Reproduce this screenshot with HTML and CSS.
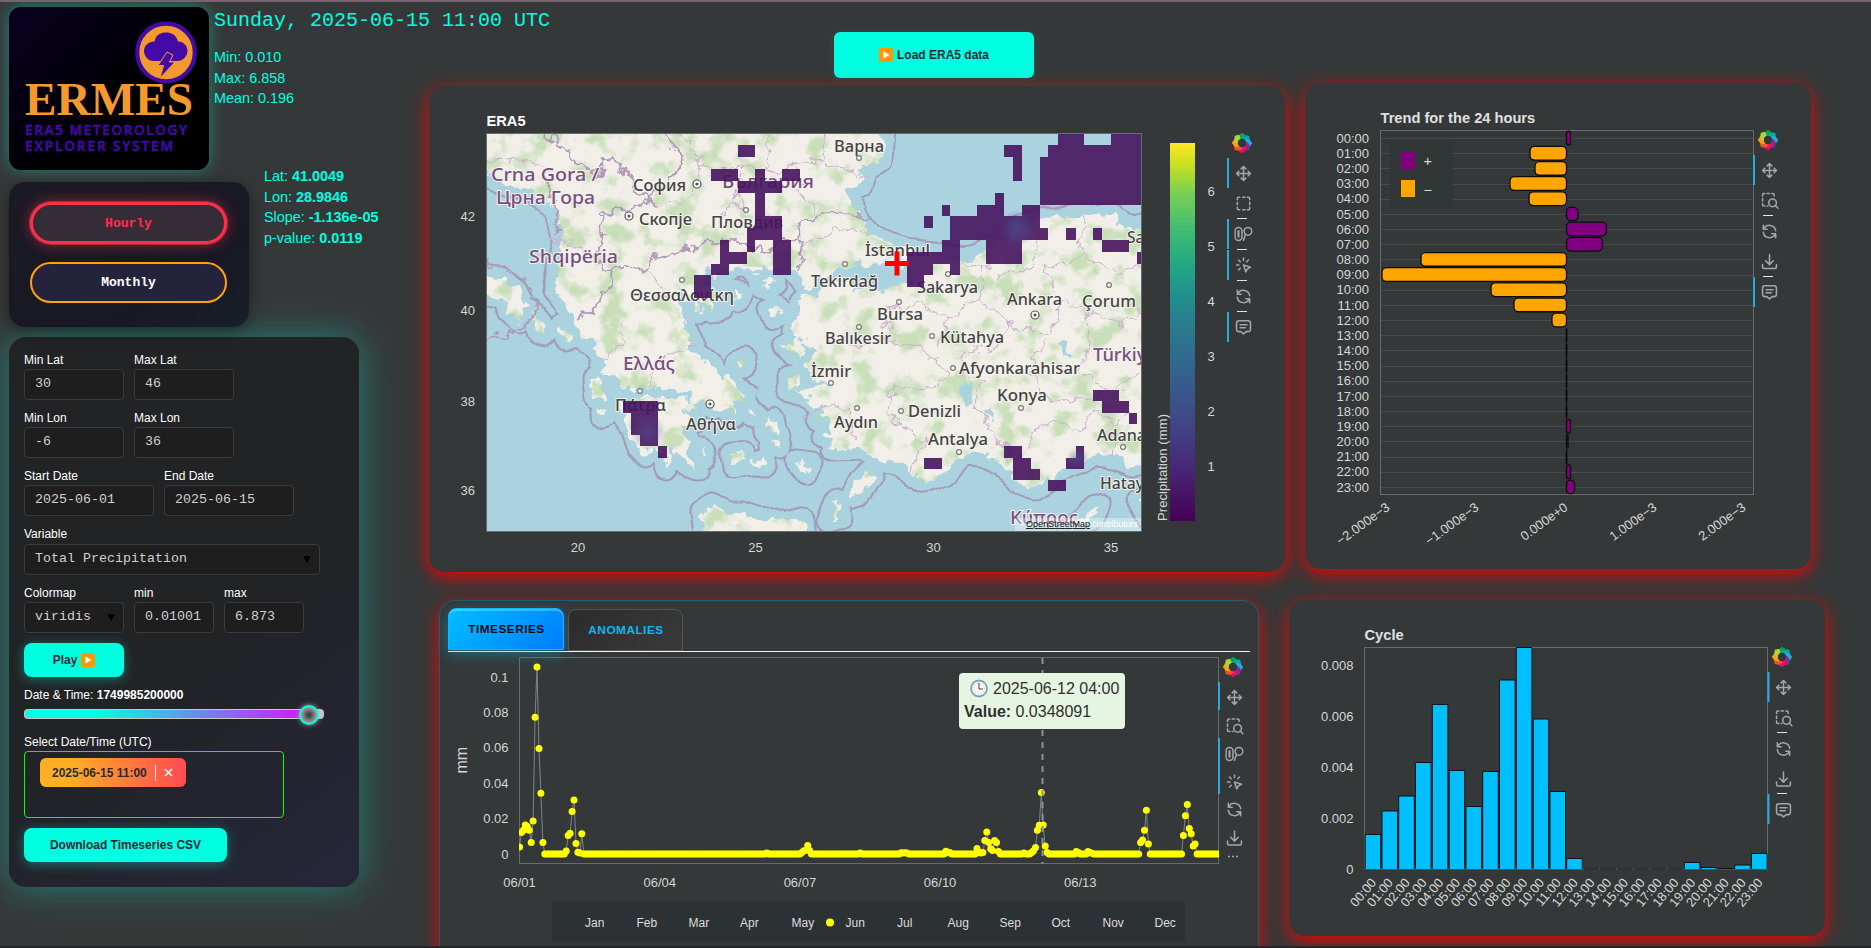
FILE: index.html
```
<!DOCTYPE html>
<html lang="en">
<head>
<meta charset="utf-8">
<title>ERMES</title>
<link rel="stylesheet" href="styles.css">
</head>
<body>
<svg class="defs" width="0" height="0" aria-hidden="true">
  <defs>
    <symbol id="i-pan" viewBox="0 0 24 24"><path d="M18 9l3 3l-3 3M6 9l-3 3l3 3M3 12h18M9 18l3 3l3-3M15 6l-3-3l-3 3M12 3v18"/></symbol>
    <symbol id="i-select" viewBox="0 0 24 24"><path d="M4 7V5.500Q4 4 5.500 4H7M11 4h3M17 4h1.500Q20 4 20 5.500V7M20 10.500v3M20 17v1.500Q20 20 18.500 20H17M14 20h-3M7 20H5.500Q4 20 4 18.500V17M4 13.500v-3"/></symbol>
    <symbol id="i-zoombox" viewBox="0 0 24 24"><path d="M3 6V4.500Q3 3 4.500 3H6M9 3h3M15 3h1.500Q18 3 18 4.500V6M3 9.500v3M3 16v1.500Q3 19 4.500 19H6M9 19h1"/><circle cx="16" cy="15" r="5"/><path d="M19.500 18.500l3.500 3.500"/></symbol>
    <symbol id="i-wheel" viewBox="0 0 24 24"><rect x="1" y="3.500" width="9" height="17" rx="4.500"/><path d="M5.500 8.500v7" stroke-width="2.800"/><circle cx="17.800" cy="8.500" r="5"/><path d="M14.500 12.500l-2.500 7.500"/></symbol>
    <symbol id="i-tap" viewBox="0 0 24 24"><path d="M3 12h3M12 3v3M7.800 7.800l-2.200-2.200M16.200 7.800l2.200-2.200M7.800 16.200l-2.200 2.200M12 12l9 3l-4 2l-2 4z"/></symbol>
    <symbol id="i-reset" viewBox="0 0 24 24"><path d="M20 11a8.100 8.100 0 0 0-15.500-2M4 4v5h5M4 13a8.100 8.100 0 0 0 15.500 2M20 20v-5h-5"/></symbol>
    <symbol id="i-save" viewBox="0 0 24 24"><path d="M3 16v3a2 2 0 0 0 2 2h14a2 2 0 0 0 2-2v-3M7 11l5 5l5-5M12 3v13"/></symbol>
    <symbol id="i-hover" viewBox="0 0 24 24"><path d="M7.500 9h9M7.500 13h7M8.500 18H6a3 3 0 0 1-3-3V7a3 3 0 0 1 3-3h12a3 3 0 0 1 3 3v8a3 3 0 0 1-3 3h-2.500L12 21z"/></symbol>
    <symbol id="i-play" viewBox="0 0 14 14"><rect width="14" height="14" rx="1.500" fill="#ff9800"/><path d="M4.500 3.500L10.500 7L4.500 10.500z" fill="#fff"/></symbol>
  </defs>
</svg>

<div class="page">
  <aside class="sidebar">
    <div class="brand">
      <div class="logo">
        <svg viewBox="0 0 200 163" width="200" height="163">
          <text class="logo-name" x="16" y="108" textLength="168" lengthAdjust="spacingAndGlyphs">ERMES</text>
          <text class="logo-sub" x="16" y="128" textLength="162">ERA5 METEOROLOGY</text>
          <text class="logo-sub" x="16" y="144" textLength="148">EXPLORER SYSTEM</text>
          <circle cx="157" cy="45.500" r="28.800" fill="#f39a2e" stroke="#430aa6" stroke-width="4.200"/>
          <path fill="#430aa6" d="M145 54C139 54 135 49 135 44S139 34.500 145.500 34.500C147 28 151 25.500 157 25.500S167 28 169 34.500C175 34.500 178.500 39 178.500 44S174 54 168 54z"/>
          <path fill="#430aa6" stroke="#f39a2e" d="M158 45L149 58.500H154.500L151 71L166 55H160.500L164 48z"/>
        </svg>
      </div>
      <div class="headline">
        <h1>Sunday, 2025-06-15 11:00 UTC</h1>
        <p>Min: 0.010</p><p>Max: 6.858</p><p>Mean: 0.196</p>
      </div>
    </div>
    <div class="mode">
      <div class="mode-panel">
        <button class="pill active">Hourly</button>
        <button class="pill">Monthly</button>
      </div>
      <div class="point">
        <p>Lat: <b>41.0049</b></p><p>Lon: <b>28.9846</b></p><p>Slope: <b>-1.136e-05</b></p><p>p-value: <b>0.0119</b></p>
      </div>
    </div>
    <div class="controls">
      <div class="row">
        <div class="field w100"><span>Min Lat</span><div class="box">30</div></div>
        <div class="field w100"><span>Max Lat</span><div class="box">46</div></div>
      </div>
      <div class="row">
        <div class="field w100"><span>Min Lon</span><div class="box">-6</div></div>
        <div class="field w100"><span>Max Lon</span><div class="box">36</div></div>
      </div>
      <div class="row">
        <div class="field w130"><span>Start Date</span><div class="box">2025-06-01</div></div>
        <div class="field w130"><span>End Date</span><div class="box">2025-06-15</div></div>
      </div>
      <div class="row">
        <div class="field variable"><span>Variable</span><div class="box select">Total Precipitation<i></i></div></div>
      </div>
      <div class="row">
        <div class="field w100"><span>Colormap</span><div class="box select">viridis<i></i></div></div>
        <div class="field w80"><span>min</span><div class="box">0.01001</div></div>
        <div class="field w80"><span>max</span><div class="box">6.873</div></div>
      </div>
      <button class="cyan play">Play <svg width="14" height="14"><use href="#i-play"/></svg></button>
      <div class="label">Date &amp; Time: <b>1749985200000</b></div>
      <div class="slider"><div class="fill"></div><div class="knob"></div></div>
      <div class="label">Select Date/Time (UTC)</div>
      <div class="choices"><div class="chip">2025-06-15 11:00<span class="sep"></span><svg width="9" height="9" viewBox="0 0 9 9"><path d="M1 1l7 7M8 1l-7 7"/></svg></div></div>
      <button class="cyan download">Download Timeseries CSV</button>
    </div>
  </aside>

  <main class="main">
    <button class="cyan load"><svg width="14" height="14"><use href="#i-play"/></svg> Load ERA5 data</button>
    <div class="cards top">
      <section class="card map-card"><svg id="map" viewBox="429 86 856 486" width="856" height="486">
        <defs>
          <clipPath id="frame"><rect x="486.500" y="133.500" width="655" height="398"/></clipPath>
          <filter id="rough" x="470" y="120" width="690" height="430" filterUnits="userSpaceOnUse" color-interpolation-filters="sRGB">
            <feTurbulence type="fractalNoise" baseFrequency="0.080" numOctaves="3" seed="4" result="n"/>
            <feDisplacementMap in="SourceGraphic" in2="n" scale="18" xChannelSelector="R" yChannelSelector="G"/>
          </filter>
          <filter id="wavy" x="470" y="120" width="690" height="430" filterUnits="userSpaceOnUse" color-interpolation-filters="sRGB">
            <feTurbulence type="fractalNoise" baseFrequency="0.035" numOctaves="1" seed="4" result="n"/>
            <feDisplacementMap in="SourceGraphic" in2="n" scale="14" xChannelSelector="R" yChannelSelector="G"/>
          </filter>
          <filter id="woods" x="486" y="133" width="656" height="398" filterUnits="userSpaceOnUse" color-interpolation-filters="sRGB">
            <feTurbulence type="fractalNoise" baseFrequency="0.040" numOctaves="5" seed="11"/>
            <feColorMatrix values="0 0 0 0 0.720  0 0 0 0 0.850  0 0 0 0 0.650  5 0 0 0 -2.450" result="g"/>
            <feComposite in="g" in2="SourceGraphic" operator="in"/>
          </filter>
          <linearGradient id="viridis" x1="0" y1="1" x2="0" y2="0">
            <stop offset="0" stop-color="#440154"/><stop offset=".13" stop-color="#482475"/><stop offset=".25" stop-color="#414487"/><stop offset=".38" stop-color="#355f8d"/><stop offset=".5" stop-color="#2a788e"/><stop offset=".6" stop-color="#21918c"/><stop offset=".68" stop-color="#22a884"/><stop offset=".78" stop-color="#44bf70"/><stop offset=".87" stop-color="#7ad151"/><stop offset=".95" stop-color="#d0e11c"/><stop offset="1" stop-color="#fde725"/>
          </linearGradient>
          <radialGradient id="spot"><stop offset="0" stop-color="#46518f" stop-opacity=".9"/><stop offset="1" stop-color="#46518f" stop-opacity="0"/></radialGradient>
          <g id="land">
            <path d="M460 110H885L882 160L864 168L859 184L846 192L855 206L862 220L870 232L882 241L897 247L915 251L935 253L950 259L965 261L978 258L987 250L1003 240L1022 226L1045 219L1068 216L1092 216L1110 213L1121 226L1131 230L1170 222V459L1130 465L1122 461L1108 456L1096 455L1085 461L1070 467L1055 473L1045 481L1032 488L1020 485L1011 474L1000 463L985 455L970 453L960 455L952 466L945 475L925 483L911 475L898 463L872 457L862 449L832 450L836 440L822 436L832 425L816 418L828 408L812 402L800 392L815 388L830 384L812 376L805 362L815 352L812 342L800 338L792 330L800 312L800 300L812 290L804 284L798 275L785 266L760 267L738 266L722 274L708 273L702 282L716 290L720 305L706 292L712 312L698 298L700 314L688 302L678 290L676 300L684 322L694 345L686 350L703 363L716 370L726 380L734 400L735 417L728 406L714 408L704 402L692 402L698 414L684 410L694 424L684 428L686 442L695 470L681 458L674 450L669 452L667 470L662 452L652 447L645 458L638 448L632 432L624 420L622 406L634 400L652 396L668 398L690 400L686 394L665 389L640 388L620 388L614 378L600 370L605 362L595 348L575 330L574 315L566 305L556 292L555 280L558 262L563 240L560 222L556 208L542 200L520 188L500 180L460 164z"/>
            <path d="M470 272L505 280L518 290L524 305L519 322L508 312L505 300L490 296L470 298z"/>
            <path d="M532 312L540 322L546 334L538 332zM560 324L572 336L566 340zM592 382L598 378L606 396L594 398zM600 408L608 412L604 418L598 414zM694 356L712 364L726 378L740 392L746 402L736 400L722 386L706 376z"/>
            <path d="M702 512L712 506L728 514L745 514L762 520L780 518L804 520L806 540H706z"/>
            <path d="M783 346L800 338L808 348L800 356L790 352zM788 376L798 374L796 392L788 390zM737 360L746 358L744 368zM822 420l10-4l-2 8zM748 406l10 8l-8 0zM764 430l10-12l2 14zM730 454l14-2l-2 10l-10 2zM750 462l14-4l2 10zM770 444l10-6l2 10zM798 462l14 2l-6 8zM744 395l8 4M700 450l4 2l-2 4zM760 285l8-8l6 6l-6 6zM770 310l6-4l8 6l-10 4zM734 290l8 4l-2 6l-6-2zM852 498L856 484L871 469L872 476L860 496zM829 522l8-22l2 18zM1078 522L1098 504L1090 522L1070 534zM1138 500h10v14zM754 272l4-2l2 4z"/>
          </g>
        </defs>
        <g clip-path="url(#frame)">
          <rect x="486" y="133" width="656" height="399" fill="#aad3df"/>
          <g filter="url(#wavy)">
            <use href="#land" fill="#a39bb8" stroke="#a39bb8" stroke-width="25" stroke-linejoin="round"/>
            <use href="#land" fill="#aad3df" stroke="#aad3df" stroke-width="21" stroke-linejoin="round"/>
          </g>
          <g filter="url(#rough)"><use href="#land" fill="#f2efe9"/></g>
          <g filter="url(#woods)" opacity=".7"><use href="#land"/></g>
          <g filter="url(#rough)" fill="none">
            <path fill="#aad3df" d="M842 268L868 262L893 264L910 270L916 284L895 282L882 294L858 288L838 280L812 296L808 292zM960 386l8-5l3 22l-5 5zM984 406l8 4l2 10l-8-3zM1060 345l8-5l5 15l-6 2zM905 415l9-1l-2 4z"/>
            <g stroke="#b09ab8" stroke-width="2.200">
              <path d="M542 110V130L545 141L556 138L575 162L598 175L606 157L618 162L632 186M665 110V130L683 162L670 180L640 208L622 210L600 215L602 240L597 256L602 270L645 268L655 258L680 252L705 244L735 240L755 250L775 248L798 238L800 222L818 213L870 217M798 238L804 258L797 272M632 186L660 206M610 270L613 285L600 300L580 322M556 208L556 232M545 175L556 208M470 258L500 266L524 280L538 300L534 320L510 334L470 350"/>
            </g>
            <g stroke="#cbb3cb" stroke-width="1.300">
              <path d="M470 158L520 160L545 168M680 133L700 165L720 172L745 168L770 172L795 165L820 160L870 180M700 165L695 195L668 206M745 168L738 205L716 218M795 165L800 195L820 213M770 113L768 172M830 113L820 160M545 240L570 238L590 268M650 268L668 300M620 322L622 345L600 358M650 388L655 360L700 345M800 420L830 405L850 408L855 440M850 345L890 340L925 352L950 375L930 390L895 388L885 415L925 440L910 472M890 340L885 310L920 305L945 318L980 300L985 270L960 262M945 318L940 350M980 300L1010 325L1000 345L965 352L960 375L985 385L975 400L995 440L1025 470M1010 325L1050 335L1060 300L1045 270L1080 255L1085 215M1060 300L1085 310L1120 325L1162 300M1085 310L1090 345L1080 370L1110 392L1085 400L1050 400L1030 370L1045 340M1110 392L1130 380L1162 355M1080 255L1120 270L1162 262M1033 450L1032 428L1055 420L1080 430L1095 410L1110 425L1130 410M1040 240L1030 265L1000 275M870 233L845 225L820 240L800 250M1112 460L1118 430"/>
            </g>
          </g>
          <g id="places"></g>
          <g id="cells" fill="#471560" opacity=".9"></g>
          <circle cx="648" cy="432" r="18" fill="url(#spot)" opacity=".55"/><circle cx="1017" cy="228" r="18" fill="url(#spot)" opacity=".8"/><circle cx="1077" cy="459" r="11" fill="url(#spot)" opacity=".6"/>
          <path d="M885 263.500h24M897 251.500v24" stroke="#f00" stroke-width="5"/>
          <rect x="1015" y="518" width="127" height="14" fill="#fff" opacity=".35"/>
          <text class="osm" x="1026" y="527" textLength="64">OpenStreetMap</text>
          <text class="osm2" x="1092" y="527" textLength="46">contributors</text>
        </g>
        <rect class="outline" x="486.500" y="133.500" width="655" height="398"/>
        <rect x="1170" y="143" width="25" height="378" fill="url(#viridis)"/>
        <text class="title light" x="486.500" y="126">ERA5</text>
      </svg></section>
      <section class="card trend-card"><svg id="trend" viewBox="1305 83 506 486" width="506" height="486"></svg></section>
    </div>
    <div class="cards bottom">
      <section class="card series-card">
        <nav class="tabs"><div class="tab on">TIMESERIES</div><div class="tab">ANOMALIES</div></nav>
        <svg id="series" viewBox="440 652 818 296" width="818" height="296"></svg>
      </section>
      <section class="card cycle-card"><svg id="cycle" viewBox="1289 600 536 336" width="536" height="336"></svg></section>
    </div>
  </main>
</div>
<script src="charts.js"></script>
</body>
</html>
```
FILE: styles.css
```
* { box-sizing: border-box; }
body { margin: 0; height: 948px; overflow: hidden; background: #353838; color: #fff; font-family: "Liberation Sans", Arial, sans-serif; font-size: 12px; }
p, h1 { margin: 0; font-weight: normal; }
svg { display: block; }
.defs { position: absolute; }
.page { display: flex; height: 948px; padding: 5px 0 0 9px; border-top: 2px solid #75636e; border-bottom: 2px solid #242628; overflow: hidden; }
.sidebar { width: 420px; flex: none; }

.brand { display: flex; gap: 5px; height: 163px; }
.logo { width: 200px; height: 163px; border-radius: 12px; overflow: hidden; background: linear-gradient(135deg, #080020, #000 60%); box-shadow: 0 0 15px rgba(0, 255, 225, .38); flex: none; }
.logo-name { font: bold 47px "Liberation Serif", serif; fill: #f39a2e; }
.logo-sub { font: 600 13.500px "Open Sans", "Noto Sans", sans-serif; fill: #430aa6; stroke: #430aa6; stroke-width: .5px; }
.headline, .point { color: #00ffe1; font-size: 14.400px; line-height: 20.570px; white-space: nowrap; }
.headline h1 { font: 20px/24px "Liberation Mono", monospace; margin: 2px 0 14px; }

.mode { display: flex; gap: 15px; height: 145px; margin-top: 12px; }
.mode-panel { width: 240px; border-radius: 16px; background: linear-gradient(145deg, #1b1a24, #181824 70%, #18202a); box-shadow: 0 4px 15px rgba(0, 0, 0, .4); padding: 20px 22px 0 21px; display: flex; flex-direction: column; gap: 18px; }
.pill { height: 41px; border-radius: 21px; border: 2px solid #ffa20c; background: #24233b; color: #fff; font: bold 13px "Liberation Mono", monospace; padding: 0; }
.pill.active { height: 42px; border: 3px solid #ff2f4b; background: #342d38; color: #ff2f4b; box-shadow: 0 0 0 1px #a42a3d, 0 0 14px rgba(255, 47, 75, .55); }
.point { margin-top: -16px; }

.controls { width: 350px; height: 550px; margin-top: 10px; padding: 16px 15px; border-radius: 17px; background: linear-gradient(145deg, #212325 55%, #26263a); box-shadow: 0 0 38px rgba(0, 255, 225, .36); display: flex; flex-direction: column; }
.row { display: flex; gap: 10px; margin-bottom: 11px; }
.field span { display: block; height: 16px; line-height: 14px; }
.field.variable span { height: 17px; }
.box { position: relative; height: 31px; border: 1px solid #3b3b3b; border-radius: 4px; background: #1e1e1e; color: #d0d0d0; font: 13.330px/28px "Liberation Mono", monospace; padding-left: 10px; white-space: nowrap; }
.select i { position: absolute; right: 8px; top: 11px; border: 4px solid transparent; border-top: 7px solid #000; border-bottom: 0; }
.w100 { width: 100px; } .w130 { width: 130px; } .w80 { width: 80px; } .variable { width: 296px; }
.cyan { display: flex; align-items: center; justify-content: center; gap: 4px; height: 34px; border: 0; border-radius: 8px; background: #00ffe1; color: #1e2a38; font: bold 12px "Liberation Sans", sans-serif; box-shadow: 0 2px 12px rgba(0, 255, 225, .38); padding: 0; flex: none; }
.play { width: 100px; margin-top: -1px; }
.label { line-height: 14px; margin-top: 11px; }
.slider { position: relative; width: 300px; height: 10px; margin: 7px 0 5px; border-radius: 4px; background: #c8c8c8; padding: 1px; flex: none; }
.fill { width: 285px; height: 8px; border-radius: 4px 0 0 4px; background: linear-gradient(90deg, #00ffe1 25%, #d01cf7 96%); }
.knob { position: absolute; left: 275px; top: -4px; width: 20px; height: 20px; border-radius: 50%; border: 2px solid #00ffe1; background: radial-gradient(circle closest-side, #404244 15%, #a0a0a0); box-shadow: 0 0 5px #aaa; }
.choices { width: 260px; height: 67px; margin: 2px 0 10px; border: 1px solid #0f0; border-radius: 4px; padding: 6px 15px; flex: none; }
.chip { display: flex; align-items: center; width: 146px; height: 29px; padding-left: 12px; border-radius: 6px; background: linear-gradient(90deg, #ffaf24 20%, #ff5050 95%); color: #2b2b2b; font-weight: bold; white-space: nowrap; }
.sep { width: 1px; height: 16px; margin: 0 8px; background: #fff; }
.chip path { stroke: #fff; stroke-width: 1.500; }
.download { width: 203px; }

.main { padding-top: 25px; }
.load { width: 200px; height: 46px; margin-left: 405px; box-shadow: 0 2px 10px rgba(0, 255, 225, .1); border-radius: 6px; }
.cards { display: flex; align-items: flex-start; }
.top { margin-top: 5px; gap: 20px; }
.bottom { margin: 28px 0 0 10px; gap: 30px; }
.card { border-radius: 16px; background: #343838; box-shadow: 0 5px 17px #ea0606; flex: none; }
.map-card { width: 856px; height: 486px; margin-top: 3px; }
.trend-card { width: 506px; height: 486px; }
.series-card { width: 820px; height: 370px; border: 1px solid #1f5a70; }
.cycle-card { width: 536px; height: 336px; }
.tabs { display: flex; gap: 4px; margin: 7px 8px 0; height: 44px; border-bottom: 1px solid #f4f4f4; }
.tab { width: 115px; height: 42px; margin-top: 1px; border: 1px solid #555; border-radius: 8px 8px 0 0; background: linear-gradient(135deg, #2b2b2b, #3a3a3a); color: #06b9f8; font-weight: bold; font-size: 11.800px; letter-spacing: .5px; line-height: 40px; padding-left: 1px; text-align: center; }
.tab.on { width: 116px; margin-top: 0; border-color: #00bfff; background: linear-gradient(135deg, #00bfff, #007bff); color: #000810; box-shadow: 0 4px 15px rgba(0, 191, 255, .4), inset 0 2px 0 rgba(255, 255, 255, .25); }

text { font-family: "Liberation Sans", sans-serif; font-size: 13px; fill: #d6d6d6; }
.title { font-size: 14.670px; font-weight: bold; fill: #e0e0e0; }
.title.light { fill: #fff; }
.legend { font-size: 14.500px; }
.outline { fill: none; stroke: #666b6b; }
.tip { font-size: 16px; fill: #2f2f2f; }
.tip.bold { font-weight: bold; }
.month { font-size: 12px; fill: #ddd; }
.place { font-family: "Noto Sans", sans-serif; font-size: 16.500px; font-weight: 500; fill: #444; stroke: #f5f3ee; stroke-width: 2px; paint-order: stroke; }
.place.country { font-size: 17.500px; fill: #75507f; }
.osm { font-size: 9px; fill: #111; text-decoration: underline; }
.osm2 { font-size: 9px; fill: #fff; }
.tool { fill: none; stroke: #a1a6a6; stroke-width: 2; stroke-linecap: round; stroke-linejoin: round; }
```
FILE: charts.js
```
const el = id => document.getElementById(id);
const add = (id, html) => el(id).insertAdjacentHTML('beforeend', html);
const text = (x, y, s, anchor = 'start', extra = '') => `<text x="${x}" y="${y}" text-anchor="${anchor}" ${extra}>${s}</text>`;

const wheelColors = ['#00a551', '#00a9a5', '#26aae1', '#812c8f', '#ed0b6f', '#f05223', '#f9a01b', '#b2d235'];
const brandMark = (x, y) => `<g transform="translate(${x} ${y})">` + wheelColors.map((c, i) =>
  `<path fill="${c}" transform="rotate(${i * 45})" d="M-4.600 -2.500L-3.600 -7.500L0 -10.200L3.800 -7.800L2.400 -4.200L-1 -4.300z"/>`).join('') + '</g>';

// items: [kind, y]; 'bar' entries are [bar, top, bottom]
function toolbar(id, x, barX, logoY, items) {
  add(id, brandMark(x - 1.5, logoY) + items.map(([k, a, b]) => {
    if (k === 'bar') return `<rect x="${barX}" y="${a}" width="2" height="${b - a}" fill="#26aae1"/>`;
    if (k === 'hr') return `<rect x="${x - 6.5}" y="${a - .5}" width="10" height="1" fill="#e4e4e4"/>`;
    return `<use class="tool" href="#i-${k}" x="${x - 9.25}" y="${a - 9.25}" width="18.500" height="18.500"/>`;
  }).join(''));
}

// map labels: name, left, right, baseline, country flag
[['Crna Gora /', 491, 599, 181, 1], ['Црна Гора', 496, 595, 204, 1], ['София', 633, 686, 191], ['България', 722, 814, 188, 1],
 ['Скопје', 639, 692, 225], ['Пловдив', 711, 783, 228], ['Shqipëria', 529, 618, 263, 1], ['Θεσσαλονίκη', 630, 734, 301],
 ['Ελλάς', 623, 675, 370, 1], ['Πάτρα', 615, 666, 411], ['Αθήνα', 686, 736, 430], ['Варна', 834, 884, 152],
 ['İstanbul', 865, 930, 256], ['Tekirdağ', 811, 878, 287], ['Sakarya', 917, 978, 293], ['Bursa', 877, 923, 320],
 ['Ankara', 1007, 1062, 305], ['Çorum', 1082, 1136, 307], ['Balıkesir', 825, 891, 344], ['Kütahya', 940, 1004, 343],
 ['Türkiye', 1093, 1157, 361, 1], ['Afyonkarahisar', 959, 1080, 374], ['İzmir', 811, 851, 377], ['Konya', 997, 1047, 401],
 ['Aydın', 834, 878, 428], ['Denizli', 908, 961, 417], ['Antalya', 928, 988, 445], ['Adana', 1097, 1146, 441],
 ['Hatay', 1100, 1144, 489], ['Κύπρος', 1010, 1078, 524, 1], ['Samsun', 1127, 1186, 243]
].forEach(([s, a, b, y, c]) => add('places', text(a, y, s, 'start', `class="place${c ? ' country' : ''}" textLength="${b - a}" lengthAdjust="spacingAndGlyphs"`)));
[[746, 210], [682, 280], [640, 391], [859, 158], [845, 264], [948, 274], [899, 302], [1109, 285], [859, 327], [932, 336], [953, 368], [831, 383], [1021, 408], [857, 408], [901, 411], [959, 452], [1123, 447]]
  .forEach(([x, y]) => add('places', `<circle cx="${x}" cy="${y}" r="2.400" fill="#fff" stroke="#777" stroke-width="1.200"/>`));
[[697, 184], [629, 216], [710, 404], [1035, 315]]
  .forEach(([x, y]) => add('places', `<circle cx="${x}" cy="${y}" r="4" fill="#fff" stroke="#555" stroke-width="1.200"/><circle cx="${x}" cy="${y}" r="1.600" fill="#555"/>`));

[[738,145,755,157],[711,169,738,181],[755,169,765,181],[782,169,800,181],[738,181,782,193],[755,193,765,216],[755,216,782,240],[747,228,755,252],[720,240,729,264],[729,252,747,264],[711,264,729,275],[694,275,711,298],[773,240,791,275],
 [623,401,658,413],[631,413,658,435],[640,435,658,446],[658,446,667,458],
 [1058,133,1084,145],[1111,133,1142,145],[1048,145,1142,157],[1040,157,1142,205],[1004,145,1022,157],[1013,157,1022,181],[995,193,1004,205],[977,205,1004,216],[1022,205,1040,216],[942,205,950,216],[924,216,933,228],[950,216,1040,240],[1040,228,1048,240],[942,240,960,252],[986,240,1022,264],[907,252,960,264],[907,264,933,275],[950,264,960,275],[907,275,924,287],[1066,228,1076,240],[1093,228,1102,240],[1102,240,1129,252],[1137,252,1142,264],
 [1093,390,1119,401],[1102,401,1129,413],[1129,413,1137,424],[924,458,942,469],[1004,446,1022,458],[1013,458,1031,469],[1013,469,1040,480],[1048,480,1066,491],[1076,446,1084,458],[1066,458,1084,469]
].forEach(([a, b, c, d]) => add('cells', `<rect x="${a}" y="${b}" width="${c - a}" height="${d - b}" shape-rendering="crispEdges"/>`));

[[42, 221], [40, 315], [38, 406], [36, 495]].forEach(([v, y]) => add('map', text(475, y, v, 'end')));
[[20, 578], [25, 755.5], [30, 933.5], [35, 1111]].forEach(([v, x]) => add('map', text(x, 552, v, 'middle')));
for (let v = 1; v <= 6; v++) add('map', text(1207.5, 526 - v * 55, v));
add('map', `<text transform="translate(1167 521) rotate(-90)" textLength="107">Precipitation (mm)</text>`);
toolbar('map', 1243.5, 1227, 143, [['bar', 158, 188], ['bar', 219, 249], ['bar', 250, 280], ['bar', 312, 342], ['pan', 173.5], ['select', 203.5], ['hr', 218.5], ['wheel', 234], ['hr', 249.5], ['tap', 265], ['hr', 280.5], ['reset', 296.5], ['hr', 311.5], ['hover', 327]]);

// 24 hour trend
const hh = i => String(i).padStart(2, '0') + ':00';
add('trend', text(1380.5, 122.7, 'Trend for the 24 hours', 'start', 'class="title"'));
const ends = [1570.5, 1530, 1535, 1510, 1529, 1578, 1606.5, 1602.5, 1421, 1382, 1491, 1514, 1552, 0, 0, 0, 0, 0, 0, 1570.5, 1568, 0, 1570.5, 1574.5];
const rowY = i => 138 + i * 15.167;
ends.forEach((e, i) => add('trend', `<path d="M1380 ${Math.round(rowY(i)) + .5}H1753" stroke="#464a4a"/>` + text(1369, rowY(i) + 4.7, hh(i), 'end')));
add('trend', '<rect class="outline" x="1380.500" y="130.500" width="373" height="364"/><rect x="1390" y="141" width="63" height="67" fill="#303535" opacity=".9"/>');
ends.forEach((e, i) => {
  const y = rowY(i) - 6.8, z = 1566.5;
  if (!e) return add('trend', `<rect x="1565.700" y="${y}" width="1.700" height="14.200" fill="#0b0c0c"/>`);
  const a = Math.min(e, z), w = Math.abs(e - z);
  add('trend', `<rect x="${a}" y="${y}" width="${w}" height="13.700" rx="${Math.min(4.5, w / 2)}" fill="${e > z ? '#800080' : '#ffa500'}" stroke="#0c0c0c" stroke-width="1.300"/>`);
});
add('trend', '<rect x="1401" y="152" width="14" height="17" fill="#800080"/><rect x="1401" y="180" width="14" height="17" fill="#ffa500"/>' + text(1423.5, 166, '+', 'start', 'class="legend"') + text(1423.5, 195, '−', 'start', 'class="legend"'));
['−2.000e−3', '−1.000e−3', '0.000e+0', '1.000e−3', '2.000e−3'].forEach((s, i) =>
  add('trend', `<text transform="translate(${1388 + i * 89} 505.500) rotate(-36)" y="4.500" text-anchor="end">${s}</text>`));
toolbar('trend', 1769.5, 1753, 140, [['bar', 155, 185], ['bar', 277, 307], ['pan', 170.5], ['zoombox', 200.5], ['hr', 215.5], ['reset', 231.5], ['save', 261.5], ['hr', 276.5], ['hover', 292]]);

// hourly series, zero where not listed
const vals = new Array(360).fill(0);
const put = (start, list) => list.forEach((v, k) => vals[start + k] = v);
put(0, [.004, .0122, .0135, .0165, .0155, .0135, .0066, .0187, .0775, .106, .0598, .0344, .0066]);
put(24, [.0017, .0104, .0117, .024, .0306, .006, .001, .0005, .0115]);
put(127, [.0005]); put(145, [.0008, .0018, .002, .0048, .002]); put(175, [.0005]); put(196, [.0007, .0005, .0007, .0005]);
put(219, [.0016, .001, .0008]); put(235, [.0032, .001, .0005, .0008, .0077, .0124, .0066, .003, .002, .0077, .0066, .0015]);
put(259, [.0005]); put(263, [.0008, .0018, .0037, .0134, .0163, .0348, .0165, .0045, .0008]); put(286, [.0015, .0008]); put(292, [.0015, .0008, .0004]);
put(319, [.0066, .008, .0134, .0248, .0056]); put(341, [.0104, .0217, .028, .0144, .0115, .0045, .0056]);
const pts = vals.map((v, i) => [(519.5 + i * 1.947).toFixed(1), (854 - v * 1765).toFixed(1)]);
add('series', '<defs><clipPath id="plot"><rect x="519" y="657" width="700" height="207"/></clipPath></defs>' +
  `<rect class="outline" x="519.500" y="657.500" width="699" height="206"/><g clip-path="url(#plot)"><polyline fill="none" stroke="#808484" points="${pts.join(' ')}"/>` +
  pts.map(([x, y]) => `<circle cx="${x}" cy="${y}" r="3.500" fill="#ff0"/>`).join('') + '</g>' +
  '<path d="M1042.500 658V864" stroke="#8e9292" stroke-width="2" stroke-dasharray="6 6"/>');
[['0.1', 682], ['0.08', 717], ['0.06', 752.3], ['0.04', 788], ['0.02', 823], ['0', 859]].forEach(([s, y]) => add('series', text(508.5, y, s, 'end')));
['06/01', '06/04', '06/07', '06/10', '06/13'].forEach((s, i) => add('series', text(519.5 + i * 140.2, 887, s, 'middle')));
add('series', '<text transform="translate(467 773.500) rotate(-90)" style="font-size:16px">mm</text><rect x="552" y="902" width="633" height="40" fill="#2c3133"/><circle cx="830" cy="922.500" r="4" fill="#ff0"/>');
[['Jan', 585], ['Feb', 636.5], ['Mar', 688.5], ['Apr', 740], ['May', 791.5], ['Jun', 845.5], ['Jul', 897], ['Aug', 947.5], ['Sep', 999.5], ['Oct', 1051.5], ['Nov', 1102.5], ['Dec', 1154.5]]
  .forEach(([s, x]) => add('series', text(x, 927, s, 'start', 'class="month"')));
add('series', '<rect x="959" y="673" width="166" height="56" rx="4" fill="#e6f5e1"/><circle cx="979" cy="688.500" r="8" fill="#f8f8f8" stroke="#7fa3b4" stroke-width="1.800"/><path d="M979 683v6h4" fill="none" stroke="#444"/><circle cx="979" cy="688.500" r="5.500" fill="none" stroke="#999" stroke-width="1" stroke-dasharray=".6 2.280"/>' +
  text(993, 694, '2025-06-12 04:00', 'start', 'class="tip"') + text(964, 717, 'Value:', 'start', 'class="tip bold"') + text(1015.5, 717, '0.0348091', 'start', 'class="tip"'));
toolbar('series', 1234.5, 1218, 667, [['bar', 682, 710], ['bar', 738, 794], ['pan', 697.5], ['zoombox', 726], ['wheel', 754], ['tap', 782], ['reset', 809.5], ['save', 838]]);
add('series', '<path d="M1228 856.500h10" stroke="#a1a6a6" stroke-width="1.500" stroke-dasharray="2 2"/>');

// daily cycle
add('cycle', text(1364.5, 640, 'Cycle', 'start', 'class="title"') + '<rect class="outline" x="1364.500" y="647.500" width="403" height="221.500"/>');
[834.5, 811, 796, 762.5, 704.5, 770.5, 806.5, 771.5, 680, 647.5, 719, 791.5, 858.5, 869, 869, 869, 869, 869, 869, 862.5, 867.5, 868.5, 865, 853.5].forEach((y, i) => {
  const x = 1364.5 + i * 16.8;
  add('cycle', `<rect x="${(x + .9).toFixed(1)}" y="${y}" width="15.200" height="${869 - y}" fill="#00bfff"/><path d="M${x + .6} 869V${y}h15.600V869" fill="none" stroke="#0a1418"/>` +
    `<text transform="translate(${x + 9} 880) rotate(-50)" y="4.500" text-anchor="end">${hh(i)}</text>`);
});
[['0.008', 670], ['0.006', 721], ['0.004', 772], ['0.002', 823], ['0', 874]].forEach(([s, y]) => add('cycle', text(1353.5, y, s, 'end')));
toolbar('cycle', 1783.5, 1767.5, 657, [['bar', 672, 702], ['bar', 794, 824], ['pan', 687.5], ['zoombox', 718], ['hr', 732.5], ['reset', 749], ['save', 779], ['hr', 793.5], ['hover', 810]]);
```
